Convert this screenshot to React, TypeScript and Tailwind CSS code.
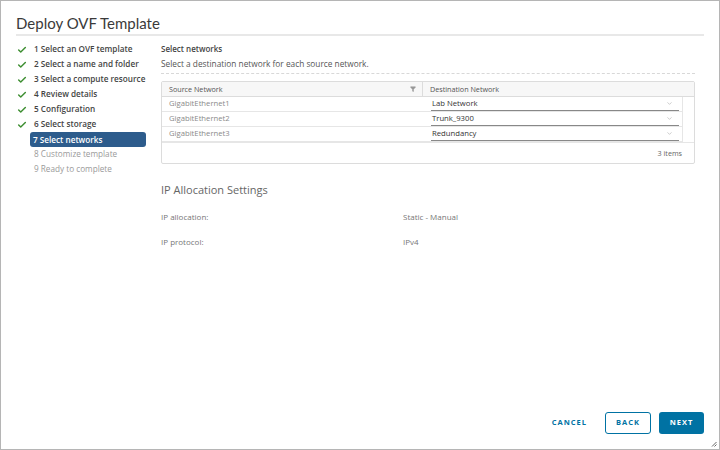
import { Check, ChevronDown, Filter } from "lucide-react";

const steps = [
  { label: "1 Select an OVF template", state: "done" },
  { label: "2 Select a name and folder", state: "done" },
  { label: "3 Select a compute resource", state: "done" },
  { label: "4 Review details", state: "done" },
  { label: "5 Configuration", state: "done" },
  { label: "6 Select storage", state: "done" },
  { label: "7 Select networks", state: "active" },
  { label: "8 Customize template", state: "todo" },
  { label: "9 Ready to complete", state: "todo" },
];

const rows = [
  { src: "GigabitEthernet1", dst: "Lab Network" },
  { src: "GigabitEthernet2", dst: "Trunk_9300" },
  { src: "GigabitEthernet3", dst: "Redundancy" },
];

export default function App() {
  return (
    <div
      className="relative w-[720px] h-[450px] bg-white border border-[#b5b5b5] flex flex-col text-[#333]"
      style={{ fontFamily: "'Open Sans', Lato, sans-serif" }}
    >
      {/* Header */}
      <div className="mx-[15px] pt-[12px] pb-[1px] border-b-2 border-[#e8e8e8]">
        <h1 className="text-[15px] leading-[20px] text-[#3a3a3a] font-['Lato',sans-serif]">Deploy OVF Template</h1>
      </div>

      <div className="flex flex-1 min-h-0">
        {/* Steps */}
        <nav className="w-[145px] pl-[16px] pt-[6px] shrink-0">
          {steps.map((s) => (
            <div key={s.label} className="flex items-center h-[15px]">
              <span className="w-[13px] flex justify-start">
                {s.state === "done" && <Check className="w-[10px] h-[10px] text-[#3f8f33]" strokeWidth={3.5} />}
              </span>
              <span
                className={
                  s.state === "active"
                    ? "flex-1 h-[15px] leading-[15px] rounded-[3px] bg-[#2d5c8c] text-white font-semibold text-[8.2px] px-[3px]"
                    : s.state === "done"
                    ? "ml-[4px] text-[8.2px] font-semibold text-[#444]"
                    : "ml-[4px] text-[8.2px] text-[#9a9a9a]"
                }
              >
                {s.label}
              </span>
            </div>
          ))}
        </nav>

        {/* Content */}
        <div className="flex-1 pl-[15px] pr-[24px] pt-[7px] flex flex-col">
          <div className="text-[8px] font-semibold text-[#444] leading-[12px]">Select networks</div>
          <div className="text-[8.3px] text-[#555] leading-[12px] mt-[3px] pb-[3px] border-b border-dashed border-[#d8d8d8]">
            Select a destination network for each source network.
          </div>

          {/* Table */}
          <div className="mt-[7px] border border-[#dcdcdc] rounded-[2px] text-[7.2px]">
            <div className="flex h-[15px] bg-[#f7f7f7] border-b border-[#dcdcdc] items-center">
              <div className="w-[261px] flex items-center justify-between pl-[7px] pr-[6px] text-[#555] border-r border-[#dcdcdc] h-full">
                <span>Source Network</span>
                <Filter className="w-[6px] h-[6px] text-[#999]" fill="#999" />
              </div>
              <div className="flex-1 pl-[7px] text-[#555]">Destination Network</div>
            </div>
            <div className="flex">
              <div className="flex-1">
                {rows.map((r) => (
                  <div key={r.src} className="flex h-[15px] border-b border-[#e6e6e6] items-center">
                    <div className="w-[261px] pl-[7px] text-[#8a8a8a] text-[7.7px]">{r.src}</div>
                    <div className="flex-1 pl-[8px] pr-[3px] h-full flex items-center">
                      <div className="w-full h-[13px] flex items-center justify-between border-b border-[#888] pl-[1px] pr-[6px]">
                        <span className="text-[#333] text-[7.7px]">{r.dst}</span>
                        <ChevronDown className="w-[7px] h-[7px] text-[#aaa]" />
                      </div>
                    </div>
                  </div>
                ))}
              </div>
              <div className="w-[12px] border-l border-[#e6e6e6]" />
            </div>
            <div className="h-[21px] flex items-center justify-end pr-[12px] text-[#666] border-t border-[#e6e6e6]">
              3 items
            </div>
          </div>

          {/* IP allocation */}
          <div className="mt-[18px] text-[11px] text-[#666]">IP Allocation Settings</div>
          <div className="mt-[12px] flex text-[8px] text-[#777]">
            <span className="w-[242px]">IP allocation:</span>
            <span>Static - Manual</span>
          </div>
          <div className="mt-[13px] flex text-[8px] text-[#777]">
            <span className="w-[242px]">IP protocol:</span>
            <span>IPv4</span>
          </div>

          {/* Footer */}
          <div className="mt-auto mb-[15px] flex justify-end items-center gap-[8px] -mr-[9px]">
            <button className="h-[22px] px-[10px] text-[7.5px] font-bold tracking-[1px] text-[#0072a3]">CANCEL</button>
            <button className="h-[22px] w-[46px] border border-[#0072a3] rounded-[3px] text-[7.5px] font-bold tracking-[1px] text-[#0072a3]">
              BACK
            </button>
            <button className="h-[22px] w-[45px] bg-[#0072a3] rounded-[3px] text-[7.5px] font-bold tracking-[1px] text-white">
              NEXT
            </button>
          </div>
        </div>
      </div>

      {/* resize grip */}
      <svg className="absolute right-[2px] bottom-[2px]" width="6" height="6" viewBox="0 0 6 6">
        <path d="M5.5 1 L1 5.5 M5.5 3.5 L3.5 5.5" stroke="#666" strokeWidth="1" />
      </svg>
    </div>
  );
}
